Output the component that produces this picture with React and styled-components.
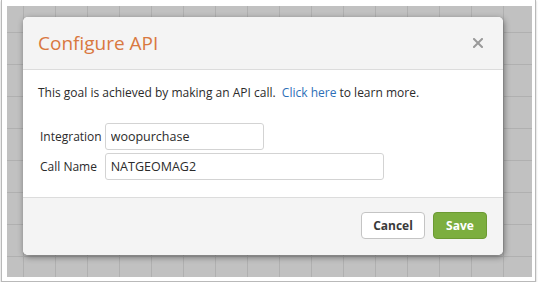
import React from "react";
import styled, { createGlobalStyle } from "styled-components";

const GlobalStyle = createGlobalStyle`
    html, body {
        margin: 0;
        padding: 0;
        background: #ffffff;
        font-family: "Open Sans", "DejaVu Sans", sans-serif;
    }
`;

const Frame = styled.div`
    width: 535px;
    height: 282px;
    margin-left: 1px;
    box-sizing: border-box;
    padding: 6px 4px 4px 5px;
    border: 1px solid #b9b9b9;
    border-top: none;
    background: #ffffff;
    box-shadow: 0 1px 2px rgba(0, 0, 0, 0.25);
`;

const Canvas = styled.div`
    width: 525px;
    height: 271px;
    box-sizing: border-box;
    padding: 11px 0 0 16px;
    background-color: #c1c1c1;
    background-image:
        linear-gradient(to right, #b0b0b0 1px, transparent 1px),
        linear-gradient(to bottom, #b0b0b0 1px, transparent 1px);
    background-size: 32px 32px;
    background-position: 16px 26px;
`;

const Dialog = styled.div`
    width: 480px;
    height: 238px;
    display: flex;
    flex-direction: column;
    border-radius: 5px;
    overflow: hidden;
    background: #ffffff;
    box-shadow: 1px 2px 6px rgba(0, 0, 0, 0.45);
`;

const Header = styled.header`
    height: 53px;
    box-sizing: border-box;
    display: flex;
    align-items: center;
    justify-content: space-between;
    padding: 0 20px 0 15px;
    background: #f4f4f4;
    border-bottom: 1px solid #dcdcdc;
`;

const Title = styled.h3`
    margin: 0;
    font-size: 19px;
    font-weight: 400;
    color: #d9783f;
`;

const CloseButton = styled.button`
    border: none;
    background: none;
    padding: 0;
    cursor: pointer;
    color: #9a9a9a;
    display: flex;
    svg {
        display: block;
    }
`;

const Body = styled.div`
    flex: 1;
    padding: 14px 15px 0;
`;

const Intro = styled.p`
    margin: 0 0 21px;
    font-size: 12px;
    line-height: 18px;
    color: #2b2b2b;
    a {
        color: #2d6fb7;
        text-decoration: none;
    }
`;

const Form = styled.div`
    display: grid;
    grid-template-columns: max-content max-content;
    column-gap: 3px;
    row-gap: 3px;
    padding-left: 2px;
    align-items: center;
`;

const Label = styled.label`
    font-size: 12px;
    color: #2b2b2b;
`;

const Input = styled.input`
    width: ${p => p.$width}px;
    height: 27px;
    box-sizing: border-box;
    padding: 0 5px;
    border: 1px solid #d3d3d3;
    border-radius: 3px;
    font-family: inherit;
    font-size: 12.5px;
    color: #2b2b2b;
    outline: none;
`;

const Footer = styled.footer`
    height: 58px;
    box-sizing: border-box;
    display: flex;
    justify-content: flex-end;
    align-items: flex-start;
    gap: 8px;
    padding: 14px 16px 0;
    background: #f4f4f4;
    border-top: 1px solid #dcdcdc;
`;

const Button = styled.button`
    width: ${p => p.$primary ? 54 : 64}px;
    height: 27px;
    box-sizing: border-box;
    padding: 0;
    border-radius: 4px;
    border: 1px solid ${p => p.$primary ? "#6c9a33" : "#c4c4c4"};
    background: ${p => p.$primary ? "#7cae3f" : "#ffffff"};
    color: ${p => p.$primary ? "#ffffff" : "#3a3a3a"};
    font-family: inherit;
    font-size: 12px;
    font-weight: 700;
    cursor: pointer;
`;

const CloseIcon = () => (
    <svg width="10" height="10" viewBox="0 0 10 10">
        <path d="M1 1 L9 9 M9 1 L1 9" stroke="currentColor" strokeWidth="2" strokeLinecap="square" />
    </svg>
);

const App = () => {
    return (
        <>
            <GlobalStyle />
            <Frame>
                <Canvas>
                    <Dialog>
                        <Header>
                            <Title>Configure API</Title>
                            <CloseButton aria-label="Close"><CloseIcon /></CloseButton>
                        </Header>
                        <Body>
                            <Intro>
                                This goal is achieved by making an API call.&nbsp; <a href="#">Click here</a> to learn more.
                            </Intro>
                            <Form>
                                <Label>Integration</Label>
                                <Input $width={159} defaultValue="woopurchase" />
                                <Label>Call Name</Label>
                                <Input $width={279} defaultValue="NATGEOMAG2" />
                            </Form>
                        </Body>
                        <Footer>
                            <Button>Cancel</Button>
                            <Button $primary>Save</Button>
                        </Footer>
                    </Dialog>
                </Canvas>
            </Frame>
        </>
    );
};

export default App;
